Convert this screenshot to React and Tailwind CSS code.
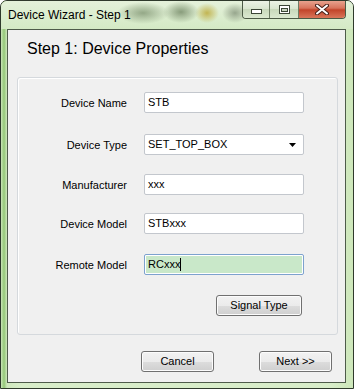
import React from 'react';

const fieldBox = 'h-[21px] w-[160px] bg-white border border-[#c3c7cd] rounded-[2px] flex items-center pl-[3px] text-[11px] text-black';
const winButton = 'h-[21px] w-[73px] rounded-[3px] border border-[#707070] bg-[linear-gradient(#f2f2f2_0%,#ebebeb_50%,#dddddd_51%,#cfcfcf_100%)] shadow-[inset_0_0_0_1px_#fcfcfc] flex items-center justify-center text-[11px] text-black';

const Row = ({ label, className, children }) => (
    <div className={`flex items-center ${className}`}>
        <div className="w-[109px] text-right text-[11px] text-black pt-[2px] leading-[13px]">{label}</div>
        <div className="ml-[17px]">{children}</div>
    </div>
);

const CaptionButtons = () => (
    <div className="flex h-[19px] -mt-px border border-t-0 border-[#4b5a45] rounded-b-[4px] overflow-hidden">
        <div className="w-[27px] flex items-end justify-center pb-[4px] bg-[linear-gradient(#eef5e8,#d9e6cf_50%,#c7d8ba_51%,#dbe9d0)] border-r border-[#6d7d64]">
            <svg width="11" height="5" viewBox="0 0 11 5">
                <rect x="0.5" y="0.5" width="10" height="4" fill="#fff" stroke="#3b4636" />
            </svg>
        </div>
        <div className="w-[29px] flex items-center justify-center bg-[linear-gradient(#eef5e8,#d9e6cf_50%,#c7d8ba_51%,#dbe9d0)] border-r border-[#6d7d64]">
            <svg width="11" height="9" viewBox="0 0 11 9">
                <rect x="0.5" y="0.5" width="10" height="8" fill="#fff" stroke="#3b4636" />
                <rect x="2.5" y="3.5" width="6" height="3" fill="#c8d6bf" stroke="#3b4636" />
            </svg>
        </div>
        <div className="w-[46px] flex items-center justify-center bg-[linear-gradient(#eaa995,#d8745c_45%,#c2442a_55%,#d9765a)]">
            <svg width="14" height="11" viewBox="0 0 14 11">
                <path d="M2 1.5 L12 9.5 M12 1.5 L2 9.5" stroke="#4a231b" strokeWidth="4" strokeLinecap="round" />
                <path d="M2 1.5 L12 9.5 M12 1.5 L2 9.5" stroke="#fff" strokeWidth="2" strokeLinecap="round" />
            </svg>
        </div>
    </div>
);

export default function App() {
    return (
        <div className="w-[354px] h-[389px] overflow-hidden rounded-t-[7px] border border-[#2f3a2c] bg-[linear-gradient(90deg,#cbe6b8_0px,#93c777_3px,#cfe8bd_6px,#d8edc9_20px,#d8edc9_330px,#cde7ba_100%)] flex flex-col font-['Liberation_Sans',Arial,sans-serif]">
            {/* title bar */}
            <div className="h-[28px] flex items-start justify-between bg-[radial-gradient(ellipse_26px_11px_at_142px_12px,#94a887_0%,#94a88700_100%),radial-gradient(ellipse_18px_11px_at_180px_11px,#889c7b_0%,#889c7b00_100%),radial-gradient(ellipse_12px_10px_at_206px_12px,#c2b552_0%,#c2b55200_100%),radial-gradient(ellipse_13px_10px_at_234px_12px,#97a68d_0%,#97a68d00_100%),linear-gradient(#e4f1da,#d4eac5)]">
                <span className="pl-[7px] pt-[6px] text-[12px] leading-[16px] text-black">Device Wizard - Step 1</span>
                <div className="mr-[7px]">
                    <CaptionButtons />
                </div>
            </div>

            {/* client area */}
            <div className="ml-[6px] w-[339px] h-[354px] border border-[#4e5b4a] bg-[#f0f0f0] flex flex-col">
                <h1 className="pl-[19px] mt-[10px] text-[16px] leading-[18px] font-normal text-black">Step 1: Device Properties</h1>

                <div className="ml-[9px] mt-[19px] w-[321px] h-[258px] border border-[#d5d9dd] rounded-[3px] shadow-[inset_1px_1px_0_#ffffff] flex flex-col">
                    <Row label="Device Name" className="mt-[14px]">
                        <div className={fieldBox}>STB</div>
                    </Row>
                    <Row label="Device Type" className="mt-[21px]">
                        <div className={`${fieldBox} justify-between pr-[7px]`}>
                            <span>SET_TOP_BOX</span>
                            <svg width="7" height="4" viewBox="0 0 7 4">
                                <path d="M0 0 H7 L3.5 4 Z" fill="#000" />
                            </svg>
                        </div>
                    </Row>
                    <Row label="Manufacturer" className="mt-[19px]">
                        <div className={fieldBox}>xxx</div>
                    </Row>
                    <Row label="Device Model" className="mt-[18px]">
                        <div className={fieldBox}>STBxxx</div>
                    </Row>
                    <Row label="Remote Model" className="mt-[20px]">
                        <div className="h-[21px] w-[160px] border border-[#7da2ce] rounded-[2px] bg-white p-px">
                            <div className="h-full bg-[#c9e8c9] flex items-center pl-[2px] text-[11px] text-black">
                                <span>RCxxx</span>
                                <span className="w-px h-[13px] bg-black" />
                            </div>
                        </div>
                    </Row>
                    <div className="w-[286px] flex justify-end mt-[20px]">
                        <div className={`${winButton} w-[86px] mr-[2px]`}>Signal Type</div>
                    </div>
                </div>

                <div className="flex mt-[16px] ml-[133px]">
                    <div className={winButton}>Cancel</div>
                    <div className={`${winButton} ml-[45px]`}>Next &gt;&gt;</div>
                </div>
            </div>
        </div>
    );
}
